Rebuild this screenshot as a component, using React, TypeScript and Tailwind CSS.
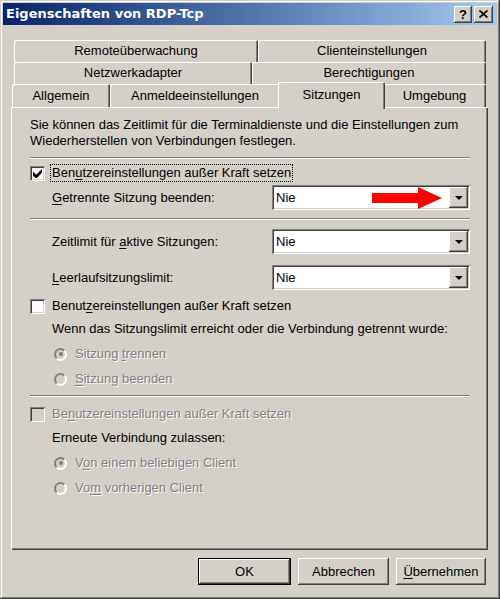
import React from "react";

const raised =
  "shadow-[inset_-1px_-1px_#404040,inset_1px_1px_#ffffff,inset_-2px_-2px_#808080,inset_2px_2px_#d4d0c8]";
const sunken =
  "shadow-[inset_1px_1px_#808080,inset_-1px_-1px_#ffffff,inset_2px_2px_#404040,inset_-2px_-2px_#d4d0c8]";
const tabEdge =
  "shadow-[inset_1px_1px_#ffffff,inset_-1px_0_#404040,inset_-2px_0_#808080]";
const disabledText = "text-[#808080] [text-shadow:1px_1px_0_#ffffff]";

function U({ children }: { children: React.ReactNode }) {
  return <span className="underline underline-offset-2">{children}</span>;
}

function CheckBox({ checked, disabled }: { checked?: boolean; disabled?: boolean }) {
  return (
    <div
      className={`w-[15px] h-[15px] shrink-0 flex items-center justify-center ${sunken} ${
        disabled ? "bg-[#d4d0c8]" : "bg-white"
      }`}
    >
      {checked && (
        <svg width="9" height="9" viewBox="0 0 7 7">
          <path d="M0 2v3l2 2h1l4-4V0L2.5 4.5Z" fill="#000" />
        </svg>
      )}
    </div>
  );
}

function Radio({ selected }: { selected?: boolean }) {
  return (
    <div className="w-[13px] h-[13px] shrink-0 rounded-full border-2 border-t-[#808080] border-l-[#808080] border-r-white border-b-white bg-[#d4d0c8] flex items-center justify-center">
      {selected && <div className="w-[4px] h-[4px] rounded-full bg-[#808080]" />}
    </div>
  );
}

function Combo() {
  return (
    <div className={`w-[198px] h-[25px] bg-white flex p-[2px] ml-auto ${sunken}`}>
      <span className="flex-1 pl-[2px] leading-[21px]">Nie</span>
      <div className={`w-[19px] h-full bg-[#d4d0c8] flex items-center justify-center ${raised}`}>
        <svg width="8" height="4" viewBox="0 0 8 4">
          <path d="M0 0h8L4 4Z" fill="#000" />
        </svg>
      </div>
    </div>
  );
}

function Separator({ className = "" }: { className?: string }) {
  return <div className={`h-[2px] border-t border-t-[#808080] border-b border-b-white ${className}`} />;
}

function Tab({ label, w, className = "" }: { label: string; w: string; className?: string }) {
  return (
    <div className={`${w} h-[22px] flex items-center justify-center rounded-t-[2px] ${tabEdge} ${className}`}>
      {label}
    </div>
  );
}

function Button({ label, w, isDefault }: { label: React.ReactNode; w: string; isDefault?: boolean }) {
  return (
    <div
      className={`${w} h-[27px] flex items-center justify-center ${
        isDefault ? "border border-black" : ""
      }`}
    >
      <div className={`w-full h-full flex items-center justify-center ${raised}`}>{label}</div>
    </div>
  );
}

export default function App() {
  return (
    <div
      className={`w-[500px] h-[599px] bg-[#d4d0c8] p-[3px] flex flex-col text-[13px] text-black font-['Liberation_Sans',Arial,sans-serif] shadow-[inset_-1px_-1px_#404040,inset_1px_1px_#d4d0c8,inset_-2px_-2px_#808080,inset_2px_2px_#ffffff]`}
    >
      {/* Title bar */}
      <div className="h-[22px] flex items-center bg-linear-to-r from-[#0a246a] to-[#a6caf0] pl-[3px] pr-[4px]">
        <span className="text-white font-bold text-[13px] font-['DejaVu_Sans',Verdana,sans-serif]">
          Eigenschaften von RDP-Tcp
        </span>
        <div className="ml-auto flex gap-[2px]">
          <div className={`w-[18px] h-[17px] bg-[#d4d0c8] flex items-center justify-center font-bold text-[13px] leading-none ${raised}`}>
            ?
          </div>
          <div className={`w-[19px] h-[17px] bg-[#d4d0c8] flex items-center justify-center ${raised}`}>
            <svg width="9" height="8" viewBox="0 0 9 8">
              <path d="M0.5 0.5L8.5 7.5M8.5 0.5L0.5 7.5" stroke="#000" strokeWidth="1.8" />
            </svg>
          </div>
        </div>
      </div>

      {/* Body */}
      <div className="flex flex-col pt-[15px] pl-[8px] pr-[9px]">
        <div className="flex pl-[3px]">
          <Tab label="Remoteüberwachung" w="w-[244px]" />
          <Tab label="Clienteinstellungen" w="w-[228px]" />
        </div>
        <div className="flex pl-[3px]">
          <Tab label="Netzwerkadapter" w="w-[238px]" />
          <Tab label="Berechtigungen" w="w-[234px]" />
        </div>
        <div className="flex items-end h-[23px] pl-[1px]">
          <Tab label="Allgemein" w="w-[98px]" className="h-[23px]" />
          <Tab label="Anmeldeeinstellungen" w="w-[170px]" className="h-[23px]" />
          <div
            className={`w-[107px] h-[27px] -mx-[2px] -mb-[2px] relative z-10 bg-[#d4d0c8] flex justify-center pt-[3px] rounded-t-[2px] ${tabEdge}`}
          >
            Sitzungen
          </div>
          <Tab label="Umgebung" w="w-[103px]" className="h-[23px]" />
        </div>

        {/* Panel */}
        <div
          className={`relative h-[443px] flex flex-col pt-[10px] pl-[19px] pr-[18px] shadow-[inset_1px_1px_#ffffff,inset_-1px_-1px_#404040,inset_-2px_-2px_#808080]`}
        >
          <p className="leading-[16px]">
            Sie können das Zeitlimit für die Terminaldienste und die Einstellungen zum
            <br />
            Wiederherstellen von Verbindungen festlegen.
          </p>
          <Separator className="mt-[8px]" />

          <div className="mt-[4px] h-[20px] flex items-center">
            <CheckBox checked />
            <span className="ml-[5px] px-[1px] border border-dotted border-black leading-[16px]">
              Ben<U>u</U>tzereinstellungen außer Kraft setzen
            </span>
          </div>
          <div className="mt-[2px] h-[25px] flex items-center pl-[22px]">
            <span>
              <U>G</U>etrennte Sitzung beenden:
            </span>
            <Combo />
          </div>
          <Separator className="mt-[8px]" />

          <div className="mt-[9px] h-[25px] flex items-center pl-[22px]">
            <span>
              Zeitlimit für <U>a</U>ktive Sitzungen:
            </span>
            <Combo />
          </div>
          <div className="mt-[11px] h-[25px] flex items-center pl-[22px]">
            <span>
              <U>L</U>eerlaufsitzungslimit:
            </span>
            <Combo />
          </div>

          <div className="mt-[6px] h-[20px] flex items-center">
            <CheckBox />
            <span className="ml-[7px]">
              Benut<U>z</U>ereinstellungen außer Kraft setzen
            </span>
          </div>
          <div className="mt-[3px] h-[20px] flex items-center pl-[22px]">
            Wenn das Sitzungslimit erreicht oder die Verbindung getrennt wurde:
          </div>
          <div className="mt-[5px] h-[20px] flex items-center pl-[24px]">
            <Radio selected />
            <span className={`ml-[8px] ${disabledText}`}>
              Sitzung <U>t</U>rennen
            </span>
          </div>
          <div className="mt-[5px] h-[20px] flex items-center pl-[24px]">
            <Radio />
            <span className={`ml-[8px] ${disabledText}`}>
              <U>S</U>itzung beenden
            </span>
          </div>
          <Separator className="mt-[6px]" />

          <div className="mt-[7px] h-[20px] flex items-center">
            <CheckBox disabled />
            <span className={`ml-[7px] ${disabledText}`}>
              Be<U>n</U>utzereinstellungen außer Kraft setzen
            </span>
          </div>
          <div className="mt-[4px] h-[20px] flex items-center pl-[22px]">Erneute Verbindung zulassen:</div>
          <div className="mt-[5px] h-[20px] flex items-center pl-[24px]">
            <Radio selected />
            <span className={`ml-[8px] ${disabledText}`}>
              V<U>o</U>n einem beliebigen Client
            </span>
          </div>
          <div className="mt-[5px] h-[20px] flex items-center pl-[24px]">
            <Radio />
            <span className={`ml-[8px] ${disabledText}`}>
              Vo<U>m</U> vorherigen Client
            </span>
          </div>

          {/* red arrow annotation */}
          <svg
            className="absolute left-[361px] top-[80px]"
            width="70"
            height="22"
            viewBox="0 0 70 22"
          >
            <path d="M0 6h46V0l24 11-24 11v-6H0Z" fill="#ff0000" />
          </svg>
        </div>

        {/* Buttons */}
        <div className="mt-[8px] flex justify-end gap-[7px] pr-[2px]">
          <Button label="OK" w="w-[93px]" isDefault />
          <Button label="Abbrechen" w="w-[91px]" />
          <Button
            label={
              <span>
                <U>Ü</U>bernehmen
              </span>
            }
            w="w-[90px]"
          />
        </div>
      </div>
    </div>
  );
}
